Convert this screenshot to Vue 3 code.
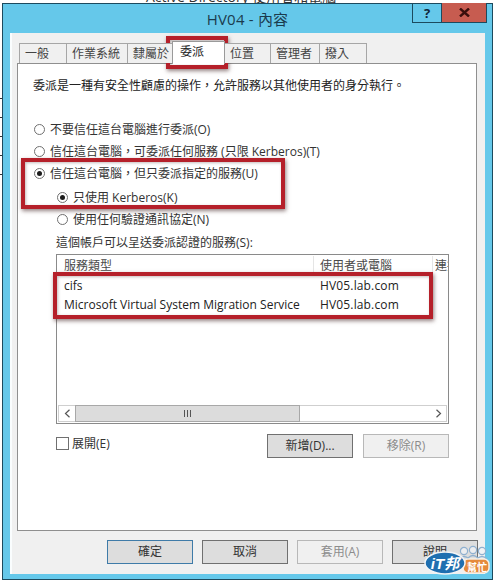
<script setup>
const tabs = ['一般', '作業系統', '隸屬於', '委派', '位置', '管理者', '撥入']
const activeTab = '委派'

const options = [
  { label: '不要信任這台電腦進行委派(O)', on: false, sub: false },
  { label: '信任這台電腦，可委派任何服務 (只限 Kerberos)(T)', on: false, sub: false },
  { label: '信任這台電腦，但只委派指定的服務(U)', on: true, sub: false },
  { label: '只使用 Kerberos(K)', on: true, sub: true },
  { label: '使用任何驗證通訊協定(N)', on: false, sub: true }
]

const services = [
  { type: 'cifs', host: 'HV05.lab.com' },
  { type: 'Microsoft Virtual System Migration Service', host: 'HV05.lab.com' }
]
</script>

<template>
  <div class="page">
    <div class="behind">Active Directory 使用者和電腦</div>
    <div class="behind-ticks"></div>

    <div class="window">
      <div class="titlebar">
        <span class="title">HV04 - 內容</span>
        <div class="caption">
          <span class="cap-help">?</span>
          <span class="cap-close">
            <svg width="11" height="9" viewBox="0 0 11 9">
              <path d="M1 0.5 L10 8.5 M10 0.5 L1 8.5" stroke="#3a0f0c" stroke-width="2.4" fill="none" />
            </svg>
          </span>
        </div>
      </div>

      <div class="client">
        <div class="tabs">
          <div
            v-for="t in tabs"
            :key="t"
            class="tab"
            :class="{ active: t === activeTab }"
          >
            {{ t }}
          </div>
        </div>

        <div class="panel">
          <p class="intro">委派是一種有安全性顧慮的操作，允許服務以其他使用者的身分執行。</p>

          <div class="options">
            <div
              v-for="o in options"
              :key="o.label"
              class="option"
              :class="{ sub: o.sub }"
            >
              <span class="radio" :class="{ on: o.on }"></span>
              <span>{{ o.label }}</span>
            </div>
          </div>

          <div class="services">
            <div class="services-label">這個帳戶可以呈送委派認證的服務(S):</div>
            <div class="list">
              <div class="list-row list-head">
                <span class="col-type">服務類型</span>
                <span class="col-host">使用者或電腦</span>
                <span class="col-port">連接埠</span>
              </div>
              <div v-for="s in services" :key="s.type" class="list-row">
                <span class="col-type">{{ s.type }}</span>
                <span class="col-host">{{ s.host }}</span>
              </div>
              <div class="list-fill"></div>
              <div class="scrollbar">
                <span class="sb-arrow">
                  <svg width="7" height="9" viewBox="0 0 7 9">
                    <path d="M5.5 0.8 L1.5 4.5 L5.5 8.2" stroke="#555" stroke-width="1.2" fill="none" />
                  </svg>
                </span>
                <span class="sb-thumb"><i></i><i></i><i></i></span>
                <span class="sb-track"></span>
                <span class="sb-arrow">
                  <svg width="7" height="9" viewBox="0 0 7 9">
                    <path d="M1.5 0.8 L5.5 4.5 L1.5 8.2" stroke="#555" stroke-width="1.2" fill="none" />
                  </svg>
                </span>
              </div>
            </div>

            <div class="list-actions">
              <label class="check"><span class="box"></span>展開(E)</label>
              <div class="btn-group">
                <button class="btn">新增(D)...</button>
                <button class="btn disabled">移除(R)</button>
              </div>
            </div>
          </div>
        </div>

        <div class="footer">
          <button class="btn default">確定</button>
          <button class="btn">取消</button>
          <button class="btn disabled">套用(A)</button>
          <button class="btn">說明</button>
        </div>
      </div>
    </div>

    <!-- 紅框標註 -->
    <div class="mark mark-tab"></div>
    <div class="mark mark-option"></div>
    <div class="mark mark-list"></div>

    <svg class="stamp" width="68" height="34" viewBox="0 0 68 34">
      <g fill="#f2f4f6" fill-opacity="0.7" stroke="#8fb0cf" stroke-width="1.2">
        <circle cx="40" cy="7" r="3.6" />
        <circle cx="49" cy="6" r="3.6" />
        <circle cx="58" cy="7" r="3.6" />
      </g>
      <g fill="none" stroke="#8fb0cf" stroke-width="1.2">
        <path d="M35 15 q5 -5 10 0 M44 14 q5 -5 10 0 M53 15 q5 -5 10 0" />
      </g>
      <rect x="39" y="15" width="26" height="14" rx="5" fill="#e58a3c" stroke="#f6efe6" stroke-width="1.5" />
      <text x="53" y="26.5" text-anchor="middle" class="stamp-small">幫忙</text>
      <ellipse cx="21" cy="19" rx="20" ry="11" fill="#1f6fb0" stroke="#f2f4f6" stroke-width="1.5" />
      <text x="21" y="25" text-anchor="middle" class="stamp-big">iT邦</text>
    </svg>
  </div>
</template>

<style>
html,
body {
  margin: 0;
  background: #fff;
}
</style>

<style scoped>
.page {
  position: relative;
  width: 493px;
  height: 581px;
  overflow: hidden;
  box-sizing: border-box;
  padding: 3px 0 0 2px;
  background: #fff;
  font-family: "Open Sans", "Noto Sans CJK TC", sans-serif;
  font-size: 12px;
  color: #222;
}

.behind {
  position: absolute;
  top: -11px;
  left: 146px;
  font-size: 14px;
  line-height: 16px;
  color: #333;
  white-space: nowrap;
}

.behind-ticks {
  position: absolute;
  left: 0;
  top: 98px;
  width: 2px;
  height: 80px;
  background: repeating-linear-gradient(to bottom, #333 0, #333 1px, transparent 1px, transparent 19px);
}

.window {
  position: relative;
  box-sizing: border-box;
  width: 491px;
  height: 577px;
  border: 1px solid #1c4a5e;
  padding: 0 7px 5px;
  background: #65c8ea;
  display: flex;
  flex-direction: column;
}

.titlebar {
  position: relative;
  height: 29px;
  flex: none;
  display: flex;
  justify-content: center;
  align-items: center;
}

.title {
  font-size: 15px;
  color: #1b3b4e;
  letter-spacing: 0.2px;
}

.caption {
  position: absolute;
  top: -1px;
  right: -2px;
  display: flex;
  height: 20px;
}

.cap-help,
.cap-close {
  box-sizing: border-box;
  display: flex;
  align-items: center;
  justify-content: center;
  border: 1px solid #1c4a5e;
  border-top: none;
}

.cap-help {
  width: 30px;
  font-size: 13px;
  font-weight: 700;
  color: #10263a;
}

.cap-close {
  width: 46px;
  margin-left: -1px;
  background: #c75c50;
}

.client {
  flex: 1;
  min-height: 0;
  background: #f0f0f0;
  padding: 10px 8px 0 7px;
  display: flex;
  flex-direction: column;
  box-shadow: inset 2px 0 0 #fafdfe;
}

.tabs {
  display: grid;
  grid-template-columns: 47px 61px 45px 52px 46px 49px 47px;
  margin-left: 2px;
  height: 20px;
  flex: none;
  justify-content: start;
  position: relative;
  z-index: 1;
}

.tab {
  box-sizing: border-box;
  height: 20px;
  border: 1px solid #a6a6a6;
  border-bottom: none;
  margin-right: -1px;
  padding-left: 5px;
  line-height: 20px;
  font-size: 12px;
  color: #444;
  background: #f0f0f0;
  white-space: nowrap;
  overflow: hidden;
}

.tab.active {
  height: 23px;
  margin-top: -2px;
  padding-left: 7px;
  background: #fff;
  border-color: #9a9a9a;
  position: relative;
  z-index: 1;
  color: #222;
}

.panel {
  box-sizing: border-box;
  width: 460px;
  height: 468px;
  flex: none;
  border: 1px solid #8f8f8f;
  background: #fff;
  padding: 14px 15px 0;
}

.intro {
  margin: 0;
  height: 16px;
  line-height: 16px;
  white-space: nowrap;
  color: #222;
}

.options {
  margin-top: 24px;
  display: flex;
  flex-direction: column;
}

.option {
  height: 22px;
  display: flex;
  align-items: center;
  gap: 5px;
  white-space: nowrap;
  color: #333;
}

.option.sub {
  padding-left: 23px;
}

.option.sub:nth-child(4) {
  margin-top: 2px;
}

.radio {
  box-sizing: border-box;
  width: 11px;
  height: 11px;
  flex: none;
  border: 1px solid #707070;
  border-radius: 50%;
  background: #fff;
  display: flex;
  align-items: center;
  justify-content: center;
  margin-left: 1px;
}

.radio.on::after {
  content: "";
  width: 5px;
  height: 5px;
  border-radius: 50%;
  background: #1c1c1c;
}

.services {
  margin: 5px 0 0 23px;
}

.services-label {
  height: 16px;
  line-height: 16px;
  margin-bottom: 3px;
  white-space: nowrap;
  color: #333;
}

.list {
  box-sizing: border-box;
  width: 393px;
  height: 170px;
  border: 1px solid #8a8a8a;
  padding-top: 1px;
  display: flex;
  flex-direction: column;
}

.list-row {
  display: flex;
  height: 19px;
  flex: none;
  align-items: center;
  white-space: nowrap;
  overflow: hidden;
}

.list-head {
  height: 20px;
  color: #4a4a4a;
}

.col-type {
  box-sizing: border-box;
  width: 257px;
  padding-left: 7px;
  flex: none;
}

.col-host {
  box-sizing: border-box;
  width: 119px;
  padding-left: 6px;
  flex: none;
  letter-spacing: 0.15px;
}

.col-port {
  flex: none;
  width: 15px;
  padding-left: 2px;
  box-sizing: border-box;
  overflow: hidden;
}

.list-head span {
  height: 20px;
  line-height: 20px;
  letter-spacing: 0;
}

.list-head .col-type,
.list-head .col-host {
  border-right: 1px solid #e5e5e5;
}

.list-fill {
  flex: 1;
}

.scrollbar {
  display: flex;
  height: 17px;
  flex: none;
  margin: 0 1px 1px;
  border: 1px solid #cfcfcf;
  box-sizing: border-box;
}

.sb-arrow {
  width: 16px;
  flex: none;
  display: flex;
  align-items: center;
  justify-content: center;
  box-sizing: border-box;
  background: #fff;
}

.sb-thumb {
  box-sizing: border-box;
  width: 225px;
  flex: none;
  background: #dcdcdc;
  border: 1px solid #a8a8a8;
  margin: -1px 0;
  display: flex;
  align-items: center;
  justify-content: center;
  gap: 1px;
}

.sb-thumb i {
  display: block;
  width: 1px;
  height: 7px;
  margin-right: 1px;
  background: #555;
}

.sb-track {
  flex: 1;
  background: #fff;
}

.list-actions {
  display: flex;
  justify-content: space-between;
  align-items: flex-start;
  margin-top: 10px;
  width: 393px;
}

.check {
  display: flex;
  align-items: center;
  gap: 3px;
  height: 16px;
  margin-top: 1px;
  color: #333;
}

.box {
  box-sizing: border-box;
  width: 13px;
  height: 13px;
  border: 1px solid #707070;
  background: #fff;
}

.btn-group {
  display: flex;
  gap: 10px;
}

.btn {
  box-sizing: border-box;
  width: 86px;
  height: 24px;
  padding: 0;
  border: 1px solid #707070;
  background: #dddddd;
  color: #333;
  font: inherit;
  line-height: 20px;
}

.btn.disabled {
  background: #f0f0f0;
  border-color: #b8b8b8;
  color: #8c8c8c;
}

.btn.default {
  border-color: #3f7ba8;
}

.footer {
  display: flex;
  justify-content: flex-end;
  gap: 9px;
  padding-top: 9px;
  margin-right: -1px;
}

.mark {
  position: absolute;
  box-sizing: border-box;
  border: 4px solid #b5202a;
  box-shadow: 1px 2px 4px rgba(60, 30, 30, 0.55), inset 1px 1px 3px rgba(60, 30, 30, 0.3);
  pointer-events: none;
}

.mark-tab {
  left: 166px;
  top: 36px;
  width: 62px;
  height: 33px;
}

.mark-option {
  left: 21px;
  top: 158px;
  width: 264px;
  height: 51px;
}

.mark-list {
  left: 53px;
  top: 272px;
  width: 380px;
  height: 47px;
}

.stamp {
  position: absolute;
  left: 424px;
  top: 544px;
}

.stamp-big {
  font-family: "Liberation Sans", "Noto Sans CJK TC", sans-serif;
  font-size: 15px;
  font-weight: 700;
  font-style: italic;
  fill: #fff;
}

.stamp-small {
  font-family: "Noto Sans CJK TC", sans-serif;
  font-size: 10px;
  font-weight: 700;
  fill: #fff;
}
</style>
